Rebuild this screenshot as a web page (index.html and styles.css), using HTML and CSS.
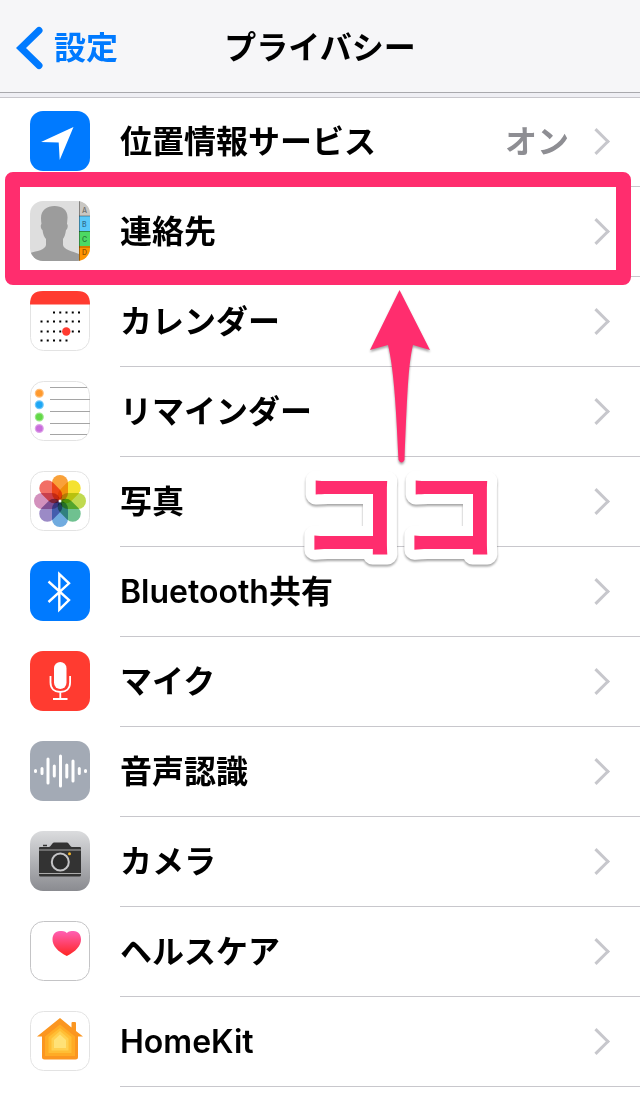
FILE: index.html
```
<!DOCTYPE html>
<html lang="ja">
<head>
    <meta charset="UTF-8">
    <meta name="viewport" content="width=device-width, initial-scale=1.0">
    <title>プライバシー</title>
    <link rel="stylesheet" href="styles.css">
</head>
<body>
    <header class="navbar">
        <a class="back" href="#settings">
            <svg width="28" height="44" viewBox="0 0 28 44" aria-hidden="true"><path d="M23 4.500L5 22l18 17.500" fill="none" stroke="currentColor" stroke-width="7" stroke-linecap="round"/></svg>
            設定
        </a>
        <h1>プライバシー</h1>
    </header>

    <main>
        <ul class="list">
            <li>
                <a class="row" href="#location">
                    <svg class="icon" viewBox="0 0 60 60" aria-hidden="true">
                        <rect width="60" height="60" rx="13" fill="#007aff"/>
                        <path d="M43.500 16L11 31l17.700.5L29.700 49z" fill="#fff"/>
                    </svg>
                    <span class="body"><span class="label">位置情報サービス</span><span class="value">オン</span><span class="chevron"></span></span>
                </a>
            </li>
            <li class="marked">
                <a class="row" href="#contacts">
                    <svg class="icon" viewBox="0 0 60 60" aria-hidden="true">
                        <defs><clipPath id="tile"><rect width="60" height="60" rx="13"/></clipPath></defs>
                        <g clip-path="url(#tile)">
                            <rect width="60" height="60" fill="#dedede"/>
                            <path d="M24.500 5C32 5 38 9 37.500 17c0 2-.5 4-.5 6 1.500 1 .5 5-1 6-.5 4-1.500 7-3 9v6c1 5 9 6 16 9v8H0v-9c7-2 15-3 16-8v-6c-2-2-3-5-3.500-9-1.500-1-2.500-5-1-6-.3-2-.5-4-.5-6C11 9 17 5 24.500 5z" fill="#9c9c9c"/>
                            <path d="M49 0h11v15H49z" fill="#c9c7c3"/>
                            <path d="M49 15h11v15H49z" fill="#5ac8fa"/>
                            <path d="M49 30h11v15H49z" fill="#4cd964"/>
                            <path d="M49 45h11v15H49z" fill="#ff9500"/>
                            <path d="M49.500 0v60M49 15h11M49 30.500h11M49 46h11" stroke="#000" stroke-opacity=".35"/>
                            <g class="tabs"><text x="52" y="12">A</text><text x="52" y="26">B</text><text x="52" y="41">C</text><text x="52" y="54">D</text></g>
                        </g>
                    </svg>
                    <span class="body"><span class="label">連絡先</span><span class="chevron"></span></span>
                </a>
                <div class="frame"></div>
                <div class="callout">
                    <svg width="60" height="174" viewBox="0 0 60 174" aria-hidden="true"><path d="M29.500 0L60 60l-17-5C38 75 37 110 34.500 170q-3 5-6 0C26 110 23 75 18 55L0 60z" fill="#ff2d6e"/></svg>
                    <svg class="callout-text" width="200" height="110" viewBox="0 0 200 110"><text x="100" y="88" text-anchor="middle">ココ</text></svg>
                </div>
            </li>
            <li>
                <a class="row" href="#calendar">
                    <svg class="icon" viewBox="0 0 60 60" aria-hidden="true">
                        <rect class="tile" x=".5" y=".5" width="59" height="59" rx="13"/>
                        <path d="M0 13.500C0 4 4 0 13 0h34c9 0 13 4 13 13.500z" fill="#ff3b30"/>
                        <path d="M23 21.500h28M10.500 30.500H51M10.500 40.500H51M10.500 49.500H38" stroke="#000" stroke-width="2" stroke-dasharray="2 4.250"/>
                        <circle cx="36.300" cy="40.500" r="4.200" fill="#ff3b30"/>
                    </svg>
                    <span class="body"><span class="label">カレンダー</span><span class="chevron"></span></span>
                </a>
            </li>
            <li>
                <a class="row" href="#reminders">
                    <svg class="icon" viewBox="0 0 60 60" aria-hidden="true">
                        <rect class="tile" x=".5" y=".5" width="59" height="59" rx="13"/>
                        <path d="M20 6.500h37M20 18.500h40M20 30.500h40M20 42.500h40M20 53.500h37" stroke="#a5a5a5"/>
                        <g stroke-width="2.500" stroke-opacity=".65">
                            <circle cx="9.300" cy="12.300" r="3.300" fill="#ff9a2e" stroke="#ff9a2e"/>
                            <circle cx="9.300" cy="23.800" r="3.300" fill="#1ea7f5" stroke="#1ea7f5"/>
                            <circle cx="9.300" cy="36" r="3.300" fill="#63d847" stroke="#63d847"/>
                            <circle cx="9.300" cy="47.500" r="3.300" fill="#c96ddc" stroke="#c96ddc"/>
                        </g>
                    </svg>
                    <span class="body"><span class="label">リマインダー</span><span class="chevron"></span></span>
                </a>
            </li>
            <li>
                <a class="row" href="#photos">
                    <svg class="icon" viewBox="0 0 60 60" aria-hidden="true">
                        <rect class="tile" x=".5" y=".5" width="59" height="59" rx="13"/>
                        <g class="petals">
                            <rect x="22" y="4" width="16" height="26" rx="8" fill="#f9a13a"/>
                            <rect x="22" y="4" width="16" height="26" rx="8" fill="#f5e230" transform="rotate(45 30 30)"/>
                            <rect x="22" y="4" width="16" height="26" rx="8" fill="#c0da50" transform="rotate(90 30 30)"/>
                            <rect x="22" y="4" width="16" height="26" rx="8" fill="#6fc190" transform="rotate(135 30 30)"/>
                            <rect x="22" y="4" width="16" height="26" rx="8" fill="#70abdf" transform="rotate(180 30 30)"/>
                            <rect x="22" y="4" width="16" height="26" rx="8" fill="#9b8ac6" transform="rotate(225 30 30)"/>
                            <rect x="22" y="4" width="16" height="26" rx="8" fill="#d391bd" transform="rotate(270 30 30)"/>
                            <rect x="22" y="4" width="16" height="26" rx="8" fill="#f26e66" transform="rotate(315 30 30)"/>
                        </g>
                        <circle cx="30" cy="30" r="1.500" fill="#fff"/>
                    </svg>
                    <span class="body"><span class="label">写真</span><span class="chevron"></span></span>
                </a>
            </li>
            <li>
                <a class="row" href="#bluetooth">
                    <svg class="icon" viewBox="0 0 60 60" aria-hidden="true">
                        <rect width="60" height="60" rx="13" fill="#007aff"/>
                        <path d="M18.500 20.500l20.500 18.500-9.700 9.700V13L39 22.300 18.500 41" fill="none" stroke="#fff" stroke-width="2.400"/>
                    </svg>
                    <span class="body"><span class="label">Bluetooth共有</span><span class="chevron"></span></span>
                </a>
            </li>
            <li>
                <a class="row" href="#microphone">
                    <svg class="icon" viewBox="0 0 60 60" aria-hidden="true">
                        <rect width="60" height="60" rx="13" fill="#ff3b30"/>
                        <rect x="24" y="11" width="12.500" height="27" rx="6.250" fill="#fff"/>
                        <path d="M20.500 25v6.500c0 6 4 9.500 9.800 9.500s9.800-3.500 9.800-9.500V25M30.300 41v7M23 48h14.500" fill="none" stroke="#fff" stroke-width="1.800"/>
                    </svg>
                    <span class="body"><span class="label">マイク</span><span class="chevron"></span></span>
                </a>
            </li>
            <li>
                <a class="row" href="#speech">
                    <svg class="icon" viewBox="0 0 60 60" aria-hidden="true">
                        <rect width="60" height="60" rx="13" fill="#a3aab5"/>
                        <path d="M5.500 29.500v1M12 27.500v5M18 18v24M24.300 25v10M30.500 15v30M36.800 24v12M43 20v20M49.300 27.500v5M55.500 29.500v1" stroke="#fff" stroke-width="3" stroke-linecap="round"/>
                    </svg>
                    <span class="body"><span class="label">音声認識</span><span class="chevron"></span></span>
                </a>
            </li>
            <li>
                <a class="row" href="#camera">
                    <svg class="icon" viewBox="0 0 60 60" aria-hidden="true">
                        <defs><linearGradient id="steel" x2="0" y2="1"><stop stop-color="#dbdcde"/><stop offset="1" stop-color="#8a8b90"/></linearGradient></defs>
                        <rect width="60" height="60" rx="13" fill="url(#steel)"/>
                        <path d="M10 16h9c2 0 3-4.500 5-4.500h13c2 0 3 4.500 5 4.500h8q1 0 1 1v27q0 1.500-1.500 1.500h-39Q9 45.500 9 44V17q0-1 1-1z" fill="#333"/>
                        <path d="M13 14.500h4" stroke="#333" stroke-width="1.500"/>
                        <path d="M9 19h42M9 42.500h42" stroke="#aaa"/>
                        <circle cx="30.300" cy="31" r="8.500" fill="#2b2b2b" stroke="#c4c4c6" stroke-width="2"/>
                        <circle cx="39.500" cy="22.800" r="1.500" fill="#f5b82e"/>
                    </svg>
                    <span class="body"><span class="label">カメラ</span><span class="chevron"></span></span>
                </a>
            </li>
            <li>
                <a class="row" href="#health">
                    <svg class="icon" viewBox="0 0 60 60" aria-hidden="true">
                        <defs><linearGradient id="heart" x2="0" y2="1"><stop stop-color="#ff5fb4"/><stop offset="1" stop-color="#ff2522"/></linearGradient></defs>
                        <rect class="tile tile-dark" x=".5" y=".5" width="59" height="59" rx="13"/>
                        <path d="M36.800 12C39 10 41 10 43.500 10c5 0 7.500 4 7.500 8.500 0 6-5 12-14.200 16.500C27.500 30.500 22.500 24.500 22.500 18.500 22.500 14 25 10 30 10c2.500 0 5 0 6.800 2z" fill="url(#heart)"/>
                    </svg>
                    <span class="body"><span class="label">ヘルスケア</span><span class="chevron"></span></span>
                </a>
            </li>
            <li>
                <a class="row" href="#homekit">
                    <svg class="icon" viewBox="0 0 60 60" aria-hidden="true">
                        <rect class="tile" x=".5" y=".5" width="59" height="59" rx="13"/>
                        <path d="M30 7l11.500 9.500V12q0-1 1-1h2.500q1 0 1 1v8l7 5.500H48V46q0 2.500-2.500 2.500h-31Q12 48.500 12 46V25.500H7z" fill="#fb9620"/>
                        <path d="M30 13.500L45 25.500V45H15V25.500z" fill="#ffab25"/>
                        <path d="M30 17l11.500 9v16h-23V26z" fill="#ffbe35"/>
                        <path d="M30 20l8.500 7.500V39.500h-17v-12z" fill="#ffd050"/>
                        <path d="M30 23.500l6 5.500v8H24v-8z" fill="#ffe277"/>
                    </svg>
                    <span class="body"><span class="label">HomeKit</span><span class="chevron"></span></span>
                </a>
            </li>
        </ul>
    </main>
</body>
</html>
```
FILE: styles.css
```
/* Basic styling */
* { box-sizing: border-box; margin: 0; padding: 0; }
body { font-family: Inter, "Noto Sans CJK JP", sans-serif; font-size: 32px; font-weight: 600; line-height: 48px; color: #000; background-color: #fff; overflow-x: hidden; }
a { color: inherit; text-decoration: none; }

/* Top bar */
.navbar { display: grid; grid-template-columns: 1fr auto 1fr; align-items: center; height: 93px; padding: 4px 16px 0; background-color: #f6f6f8; border-bottom: 1px solid #a9a9ad; }
.back { display: flex; align-items: center; gap: 10px; color: #007aff; }
h1 { font-size: 32px; font-weight: 600; }

/* Settings list */
main { padding-top: 4px; background-color: #efeff4; }
.list { list-style: none; background-color: #fff; }
.list li:first-child { box-shadow: inset 0 1px #c8c7cc; }
.row { display: flex; padding-left: 30px; }
.icon { flex: none; width: 60px; height: 60px; margin: 14px 30px 16px 0; }
.body { flex: 1; display: flex; align-items: center; min-height: 90px; padding-right: 34px; border-bottom: 1px solid #c8c7cc; }
.label { flex: 1; }
.value { margin-right: 18px; color: #8e8e93; }
.chevron { width: 19px; height: 19px; border: solid #c7c7cc; border-width: 3px 3px 0 0; transform: rotate(45deg); }

/* Icon parts */
.tile { fill: #fff; stroke: #e3e3e3; }
.tile-dark { stroke: #c4c4c6; }
.tabs { font-size: 7px; fill: #000; fill-opacity: 0.45; }
.petals { isolation: isolate; }
.petals rect { mix-blend-mode: multiply; }

/* Highlight over the contacts row */
.marked { position: relative; z-index: 1; }
.frame { position: absolute; top: -15px; right: 9px; bottom: -8px; left: 5px; border: 15px solid #ff2d6e; border-radius: 8px; pointer-events: none; }
.callout { position: absolute; top: 103px; left: 300px; display: flex; flex-direction: column; align-items: center; filter: drop-shadow(0 2px 1px rgba(0, 0, 0, 0.35)); pointer-events: none; }
.callout-text { overflow: visible; font-size: 100px; font-weight: 700; fill: #ff2d6e; stroke: #fff; stroke-width: 20px; stroke-linejoin: round; paint-order: stroke; }
```
